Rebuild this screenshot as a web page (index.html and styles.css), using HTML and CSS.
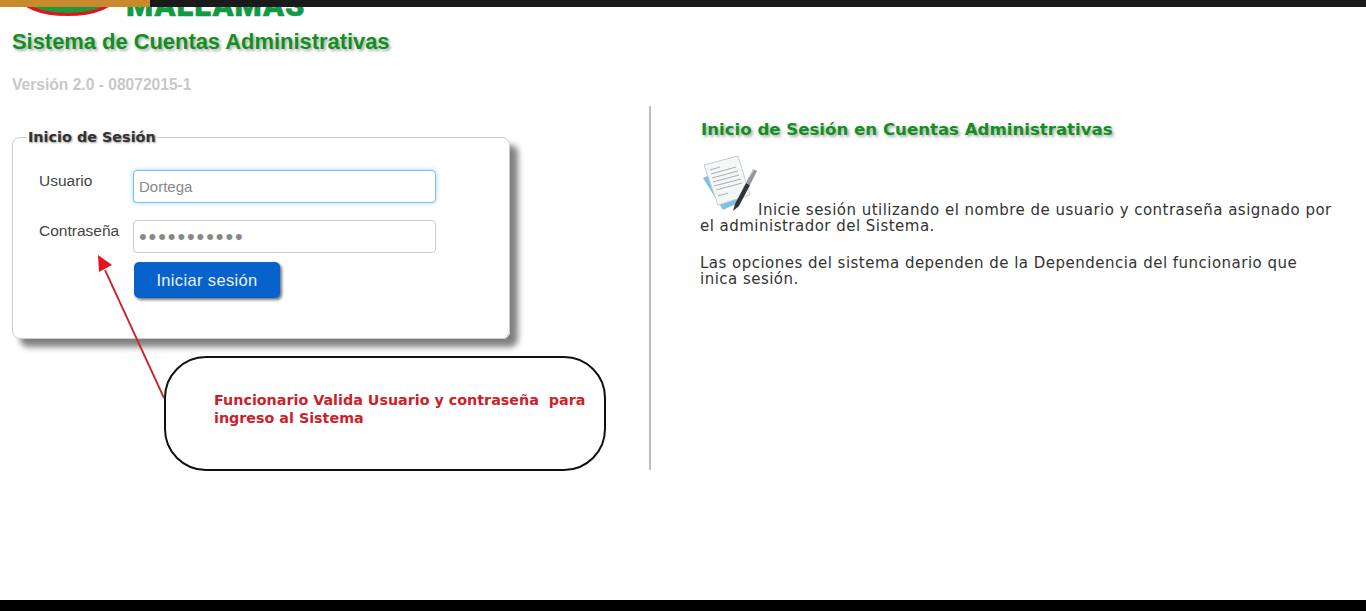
FILE: index.html
```html
<!DOCTYPE html>
<html lang="es">
<head>
<meta charset="utf-8">
<title>Sistema de Cuentas Administrativas</title>
<link rel="stylesheet" href="styles.css">
</head>
<body>
<div class="topbar"><div class="topbar-accent"></div></div>
<div class="page">
  <header class="header">
    <div class="logo-strip">
      <svg class="logo-seal" width="90" height="10" viewBox="0 0 90 10" aria-hidden="true">
        <path d="M-6 -12.5 A49.6 21 0 0 0 93.1 -12.5 Z" fill="#1d9a3c" stroke="#e0141c" stroke-width="3"/>
      </svg>
      <span class="logo-name">MALLAMAS</span>
    </div>
    <h1 class="title">Sistema de Cuentas Administrativas</h1>
    <p class="version">Versión 2.0 - 08072015-1</p>
  </header>
  <main class="columns">
    <section class="left">
      <fieldset class="login">
        <legend class="login-legend">Inicio de Sesión</legend>
        <div class="row">
          <label class="label" for="u">Usuario</label>
          <input class="field field-focus" id="u" type="text" value="Dortega">
        </div>
        <div class="row">
          <label class="label" for="p">Contraseña</label>
          <input class="field field-pass" id="p" type="password" value="12345678901">
        </div>
        <button class="submit" type="button">Iniciar sesión</button>
      </fieldset>
    </section>
    <section class="right">
      <h2 class="help-title">Inicio de Sesión en Cuentas Administrativas</h2>
      <p class="help-text">
        <svg class="doc-icon" width="58" height="58" viewBox="0 0 58 58" aria-hidden="true">
          <path d="M3 23 L23 55 L40 47 L20 15 Z" fill="#7cc0ea"/>
          <path d="M4 10 L38 1 L50 40 L18 50 Z" fill="#f5f6f6" stroke="#c6ccd0"/>
          <path d="M10 15 L20 12 M11 19 L36 12 M12 23 L38 16 M13 27 L39 20 M14 31 L41 24 M16 35 L42 28 M18 41 L28 38" stroke="#a8afb5" stroke-width="1"/>
          <path d="M33 56 L35 49 L46 28 L50 30 L39 51 Z" fill="#2f3336"/>
          <path d="M46 28 L53 14 L57 16 L50 30 Z" fill="#8f9aa0"/>
          <path d="M49 22 L54 14" stroke="#d5dadd" stroke-width="1"/>
        </svg>Inicie sesión utilizando el nombre de usuario y contraseña asignado por el administrador del Sistema.
      </p>
      <p class="help-text help-gap">Las opciones del sistema dependen de la Dependencia del funcionario que inica sesión.</p>
    </section>
  </main>
</div>
<svg class="arrow" width="80" height="150" viewBox="0 0 80 150" aria-hidden="true">
  <path d="M70 144 L11 16" stroke="#c9252d" stroke-width="1.8" fill="none"/>
  <path d="M4 1 L18 11 L5 18 Z" fill="#e3141f"/>
</svg>
<aside class="callout">Funcionario Valida Usuario y contraseña&nbsp; para ingreso al Sistema</aside>
<div class="bottombar"></div>
</body>
</html>
```
FILE: styles.css
```css
* { box-sizing: border-box; }
html, body { margin: 0; padding: 0; height: 611px; overflow: hidden; background: #fff; }
body { position: relative; font-family: "Liberation Sans", Arial, sans-serif; display: flex; flex-direction: column; }
.topbar { height: 7px; background: #1a1a1a; flex: none; }
.topbar-accent { width: 150px; height: 7px; background: #c98a2e; }
.page { flex: 1; padding-left: 12px; }
.logo-strip { height: 10px; overflow: hidden; display: flex; align-items: flex-end; }
.logo-seal { flex: none; margin-left: 12px; }
.logo-name { flex: none; margin: 0 0 -1px 12px; font: 900 31px/24px Roboto, "Liberation Sans", sans-serif; letter-spacing: 1px; color: #0f9a44; -webkit-text-stroke: .5px #0f9a44; }
.title { margin: 12px 0 0; font-size: 21.9px; line-height: 26px; font-weight: 700; color: #109020; text-shadow: 2px 2px 3px #aaa; }
.version { margin: 20px 0 0; font-size: 15.6px; line-height: 20px; font-weight: 700; color: #c8c8c8; }
.columns { display: flex; margin-top: 11px; height: 364px; }
.left { width: 639px; border-right: 2px solid #bdbdbd; flex: none; }
.login { margin: 24px 0 0; padding: 0 0 40px 25px; width: 498px; height: 209px; border: 1px solid #ccc; border-radius: 8px; box-shadow: 8px 8px 6px #808080; background: #fff; }
.login-legend { padding: 0 1px; margin-left: -11px; font: 700 14.4px/15px "DejaVu Sans", Verdana, sans-serif; color: #333; text-shadow: 1px 1px 2px #999; }
.row { display: flex; height: 33px; margin-bottom: 17px; }
.row:first-of-type { margin-top: 25px; }
.label { width: 95px; padding: 1px 0 0 1px; font-size: 15.5px; line-height: 20px; color: #444; }
.field { width: 303px; height: 33px; border: 1px solid #ccc; border-radius: 4px; padding: 0 5px; font: 15px "Liberation Sans", sans-serif; color: #888; background: #fff; }
.field-pass { font-size: 22px; letter-spacing: 1.9px; }
.field-focus { border-color: #80bdf0; box-shadow: 0 0 5px #a9d3f7; }
.submit { display: block; margin: -8px 0 0 96px; width: 146px; height: 36px; border: 0; border-radius: 5px; background: #0762cc; color: #eaf2fb; font: 16.5px "Liberation Sans", sans-serif; letter-spacing: .35px; box-shadow: 2px 2px 3px #777; }
.right { flex: 1; padding: 0 30px 0 49px; font-family: "DejaVu Sans", Verdana, sans-serif; }
.help-title { margin: 14px 0 0 1px; font: 700 16.6px/20px "DejaVu Sans", Verdana, sans-serif; color: #109020; text-shadow: 2px 2px 3px #aaa; }
.help-text { margin: 0; font-size: 15px; letter-spacing: .48px; line-height: 16px; color: #333; }
.help-text:first-of-type { margin-top: 15px; }
.help-gap { margin-top: 21px; }
.doc-icon { vertical-align: baseline; margin-bottom: 2px; }
.arrow { position: absolute; left: 94px; top: 254px; }
.callout { position: absolute; left: 164px; top: 356px; width: 442px; height: 115px; padding: 33px 10px 0 48px; border: 2px solid #111; border-radius: 42px; background: #fff; font: 700 14.3px/18px "DejaVu Sans", Verdana, sans-serif; color: #cf1e2a; }
.bottombar { height: 11px; background: #000; flex: none; }
```
